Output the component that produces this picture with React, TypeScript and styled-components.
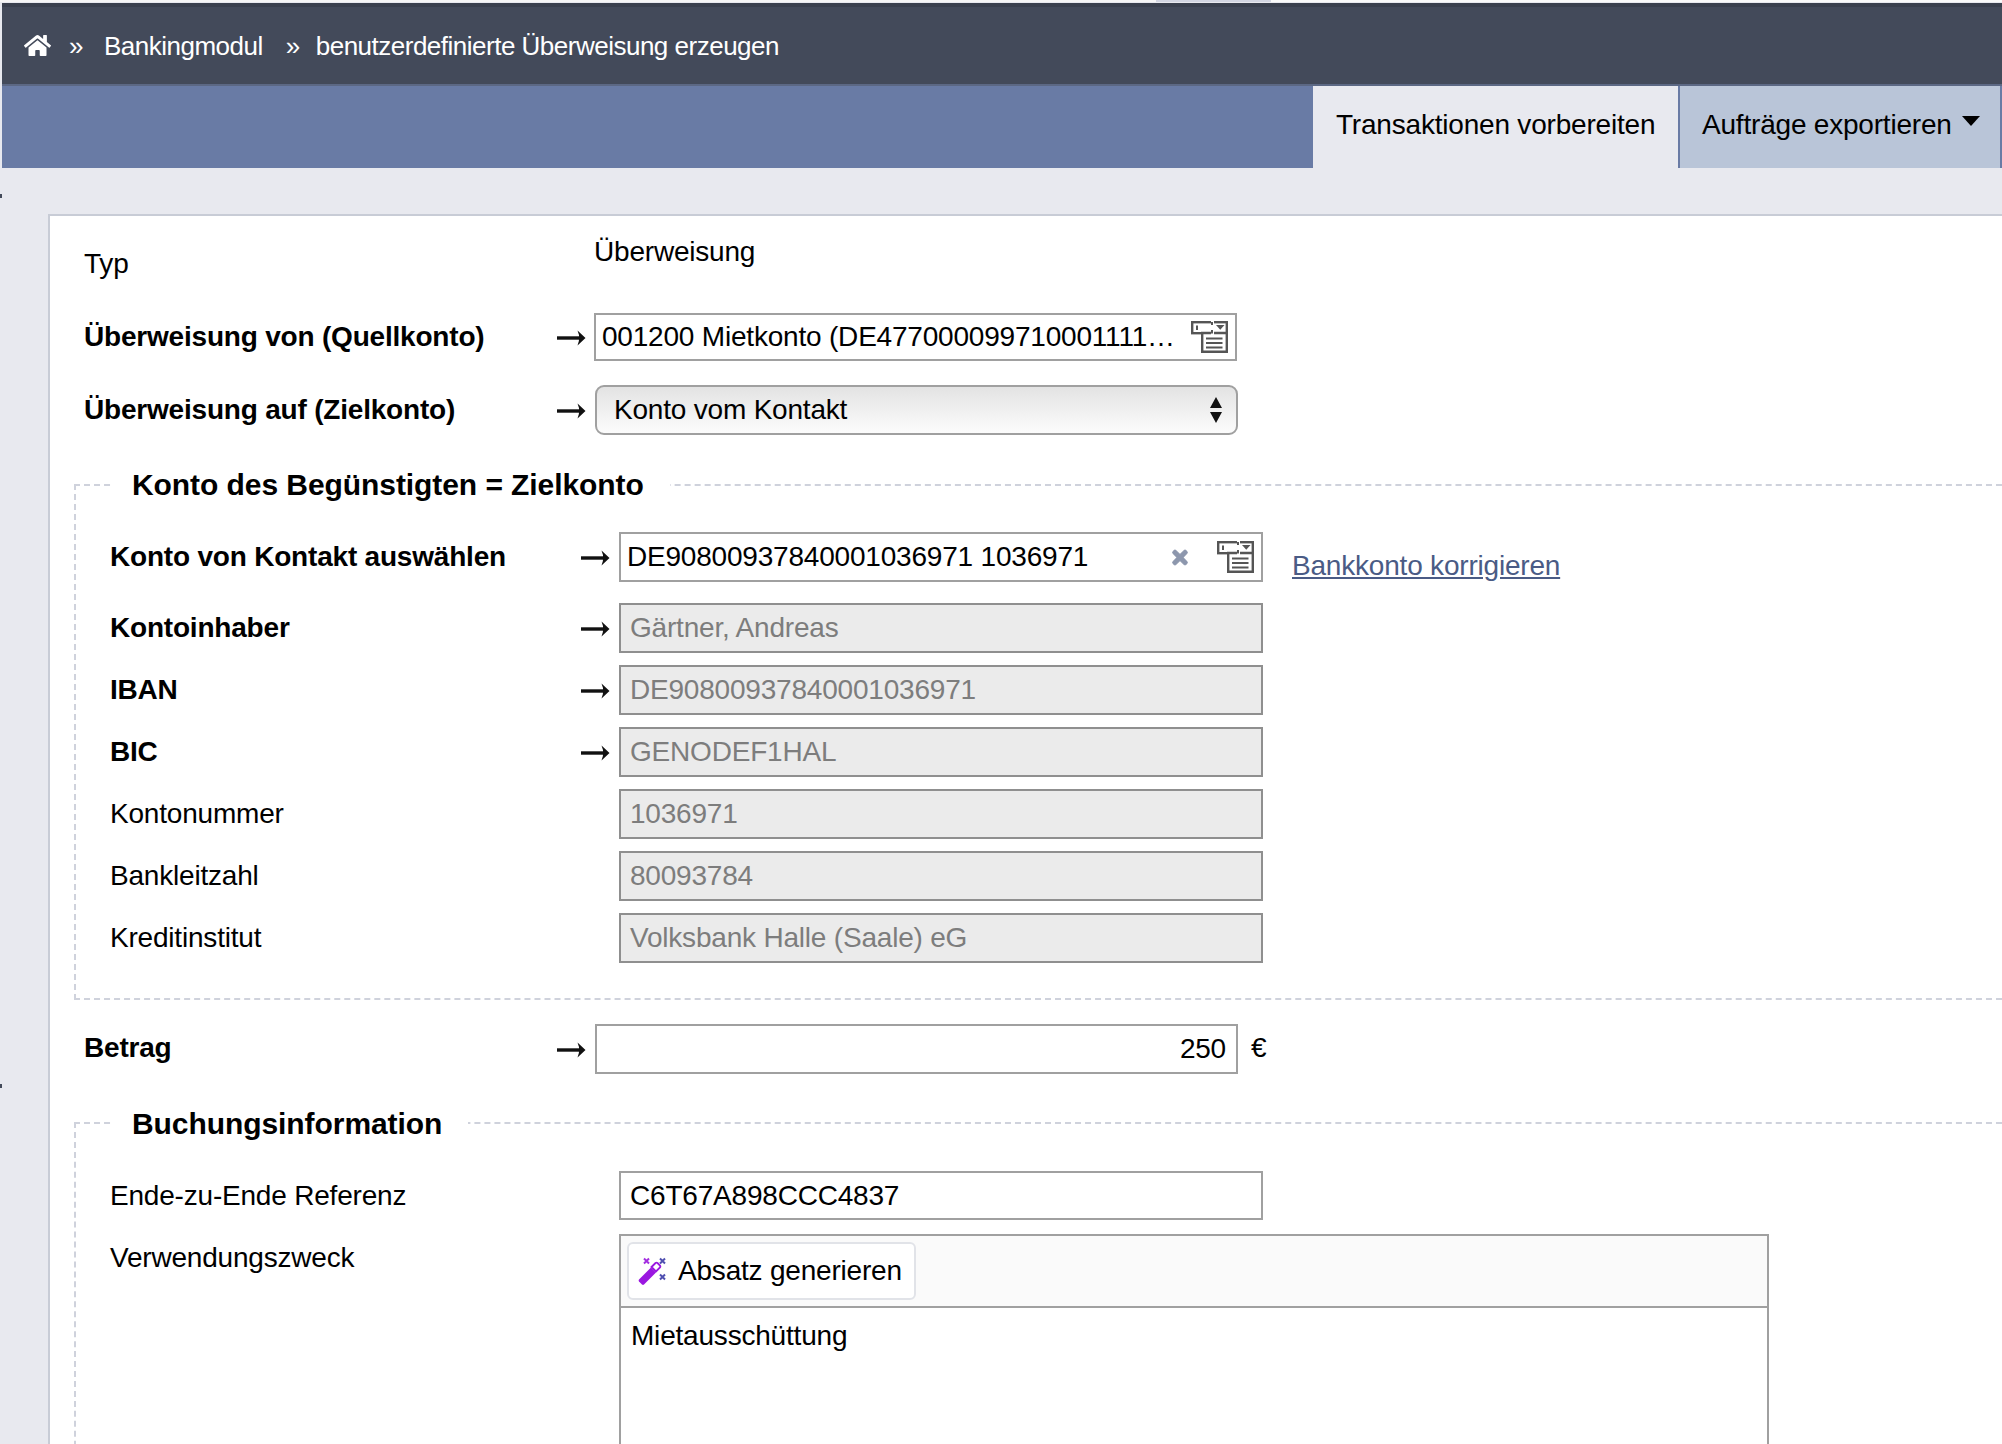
import styled, { createGlobalStyle } from "styled-components";
import { FaHome, FaTimes } from "react-icons/fa";

const GlobalStyle = createGlobalStyle`
  html, body {
    margin: 0;
    padding: 0;
    background: #e8e9ef;
  }
  * {
    box-sizing: border-box;
  }
`;

const Page = styled.div`
  position: relative;
  width: 2002px;
  height: 1444px;
  overflow: hidden;
  background: #e8e9ef;
  color: #000;
  font-family: "Liberation Sans", Arial, sans-serif;
  font-size: 28px;
  line-height: 32px;
  letter-spacing: -0.2px;
`;

const Tick = styled.i<{ $top: number }>`
  position: absolute;
  left: 0;
  top: ${(p) => p.$top}px;
  width: 2px;
  height: 4px;
  background: #434a5a;
`;

const TopStrip = styled.div`
  height: 3px;
  background: linear-gradient(90deg, #f6f6f6 1156px, #d3d6e2 1156px, #d3d6e2 1271px, #fafafa 1271px) no-repeat;
  background-size: 100% 2px;
`;

const TopBar = styled.header`
  display: flex;
  align-items: center;
  height: 83px;
  margin-left: 2px;
  padding-left: 22px;
  background: #434a5a;
  border-top: 4px solid #3a404e;
  border-bottom: 2px solid #5c6884;
  color: #fff;
  font-size: 26px;
  letter-spacing: -0.5px;
`;

const Crumb = styled.span<{ $last?: boolean }>`
  white-space: nowrap;
  padding: ${(p) => (p.$last ? "0" : "0 5px 0 3px")};
  margin-left: ${(p) => (p.$last ? "-2px" : "0")};
`;

const CrumbSep = styled.span`
  margin: 0 18px;
`;

const NavBar = styled.nav`
  display: flex;
  justify-content: flex-end;
  height: 82px;
  margin-left: 2px;
  background: #697ba5;
`;

const Tab = styled.div<{ $active?: boolean }>`
  display: flex;
  align-items: center;
  padding-bottom: 4px;
  white-space: nowrap;
  width: ${(p) => (p.$active ? "365px" : "324px")};
  padding-left: ${(p) => (p.$active ? "23px" : "22px")};
  background: ${(p) => (p.$active ? "#e8e9ef" : "#b9c5d8")};
  border-left: ${(p) => (p.$active ? "none" : "2px solid #697ba5")};
  border-right: ${(p) => (p.$active ? "none" : "2px solid #697ba5")};
`;

const Caret = styled.span`
  width: 0;
  height: 0;
  margin-left: 10px;
  margin-bottom: 8px;
  border-left: 9px solid transparent;
  border-right: 9px solid transparent;
  border-top: 10px solid #000;
`;

const Panel = styled.main`
  margin: 46px -20px 0 48px;
  height: 1300px;
  padding: 20px 0 0 34px;
  background: #fff;
  border-top: 2px solid #c8ccd6;
  border-left: 2px solid #c8ccd6;
`;

const TopRow = styled.div`
  display: grid;
  grid-template-columns: 510px 1fr;
  margin-bottom: 33px;
`;

const TypLabel = styled.span`
  margin-top: 12px;
`;

const Row = styled.div<{ $inner?: boolean; $gap?: number; $top?: number }>`
  display: grid;
  grid-template-columns: ${(p) => (p.$inner ? "471px 38px 644px auto" : "473px 37px 643px auto")};
  align-items: center;
  margin-top: ${(p) => p.$top ?? 0}px;
  margin-bottom: ${(p) => p.$gap ?? 0}px;
`;

const Label = styled.label<{ $bold?: boolean; $lift?: boolean }>`
  font-weight: ${(p) => (p.$bold ? 700 : 400)};
  white-space: nowrap;
  margin-top: ${(p) => (p.$lift ? "-2px" : "0")};
`;

const ArrowWrap = styled.span`
  display: flex;
  align-items: center;
  height: 18px;
  margin-top: 2px;
`;

const Field = styled.div<{ $disabled?: boolean; $right?: boolean; $h?: number; $shift?: boolean }>`
  display: flex;
  align-items: center;
  justify-content: ${(p) => (p.$right ? "flex-end" : "flex-start")};
  height: ${(p) => p.$h ?? 50}px;
  margin: ${(p) => (p.$shift ? "0 -1px 0 1px" : "0")};
  padding: 0 10px 0 9px;
  border: 2px solid ${(p) => (p.$disabled ? "#8f8f8f" : "#a0a0a0")};
  background: ${(p) => (p.$disabled ? "#ebebeb" : "#fff")};
  color: ${(p) => (p.$disabled ? "#7d7d7d" : "#000")};
  white-space: nowrap;
`;

const ComboField = styled(Field)`
  padding: 0 7px 0 6px;
`;

const ComboText = styled.span`
  flex: 1;
`;

const ClearIcon = styled(FaTimes)`
  width: 18px;
  height: 21px;
  margin-right: 28px;
  color: #8d97ad;
  stroke: #8d97ad;
  stroke-width: 28px;
`;

const SelectBox = styled.div`
  display: flex;
  align-items: center;
  justify-content: space-between;
  height: 50px;
  margin: 0 -1px 0 1px;
  padding: 0 13px 0 17px;
  border: 2px solid #a0a0a0;
  border-radius: 9px;
  background: linear-gradient(#e3e3e3, #fcfcfc);
`;

const SideLink = styled.a`
  margin: 18px 0 0 29px;
  color: #4a5b85;
  text-decoration: underline;
  white-space: nowrap;
`;

const Unit = styled.span`
  margin-left: 14px;
  margin-top: -3px;
`;

const Group = styled.fieldset<{ $top: number; $bottom?: number }>`
  min-width: 0;
  margin: ${(p) => p.$top}px 0 0 -10px;
  padding: 31px 0 ${(p) => p.$bottom ?? 0}px 34px;
  border: 2px dashed #cfd2dc;
`;

const GroupTitle = styled.legend<{ $low?: boolean }>`
  margin-left: 2px;
  padding: ${(p) => (p.$low ? "3px" : "0")} 26px 0 20px;
  font-size: 30px;
  font-weight: 700;
  line-height: 32px;
  letter-spacing: -0.07px;
`;

const Editor = styled.div`
  width: 1150px;
  height: 400px;
  border: 2px solid #a0a0a0;
`;

const EditorBar = styled.div`
  display: flex;
  align-items: center;
  height: 72px;
  padding-left: 6px;
  background: #fafafa;
  border-bottom: 2px solid #a0a0a0;
`;

const ToolButton = styled.button`
  display: flex;
  align-items: center;
  gap: 11px;
  height: 58px;
  padding: 0 12px 0 8px;
  background: #fff;
  border: 2px solid #e1e3e8;
  border-radius: 6px;
  color: #000;
  font: inherit;
  letter-spacing: inherit;
`;

const EditorText = styled.div`
  padding: 12px 10px;
`;

const VerwLabel = styled(Label)`
  align-self: start;
  margin-top: 8px;
`;

const Arrow = () => (
  <svg width="30" height="18" viewBox="0 0 30 18">
    <rect x="0" y="7.3" width="24" height="3.4" fill="#111" />
    <path d="M20.500 1.500 L28.500 9 L20.500 16.500 Q22.500 12 22 9 Q22.500 6 20.500 1.500 Z" fill="#111" />
  </svg>
);

const ListIcon = () => (
  <svg width="37" height="32" viewBox="0 0 37 32" style={{ flexShrink: 0 }}>
    <rect x="1.200" y="1.200" width="34.600" height="11" fill="#fff" stroke="#555" strokeWidth="2.400" />
    <path d="M11.200 12v18.800h24.600V12z" fill="#fff" stroke="#555" strokeWidth="2.400" />
    <path d="M20 0v3h3v-3zM20 10h3v4h-3z" fill="#fff" />
    <path d="M6 4.500v4.500M21 1v3M21 9v3.500" stroke="#555" strokeWidth="2" />
    <path d="M25 4h8.500l-4.250 4.800z" fill="#555" />
    <path d="M15 17.500h16.500M15 22h16.500M15 26.500h16.500" stroke="#555" strokeWidth="2.200" />
  </svg>
);

const UpDown = () => (
  <svg width="14" height="28" viewBox="0 0 14 28">
    <path d="M7 1l6 11H1zM1 16h12L7 27z" fill="#111" />
  </svg>
);

const Wand = () => (
  <svg width="30" height="30" viewBox="0 0 30 30">
    <path d="M2 23.500 L14 11.500 L19 16.500 L7 28.500 Q6 29.300 5 28.500 L2 25.500 Q1.300 24.500 2 23.500 Z" fill="#9a17e0" />
    <path d="M14.500 11 L18.500 7 Q19.500 6.300 20.500 7 L23 9.500 Q23.700 10.500 23 11.500 L19 15.500 Z" fill="#fff" stroke="#9a17e0" strokeWidth="1.800" />
    <path d="M7 2.500l5 5M12 2.500l-5 5" stroke="#a32ee0" strokeWidth="2" />
    <path d="M23 2.500l5 5M28 2.500l-5 5" stroke="#4f4fb0" strokeWidth="2" />
    <path d="M23 18.500l5 5M28 18.500l-5 5" stroke="#4f4fb0" strokeWidth="2" />
  </svg>
);

const readOnlyRows = [
	{ label: "Kontoinhaber", value: "Gärtner, Andreas", required: true },
	{ label: "IBAN", value: "DE90800937840001036971", required: true },
	{ label: "BIC", value: "GENODEF1HAL", required: true },
	{ label: "Kontonummer", value: "1036971" },
	{ label: "Bankleitzahl", value: "80093784" },
	{ label: "Kreditinstitut", value: "Volksbank Halle (Saale) eG" },
];

export default function App() {
	return (
		<Page>
			<GlobalStyle />
			<Tick $top={194} />
			<Tick $top={1084} />
			<TopStrip />
			<TopBar>
				<FaHome size={27} />
				<CrumbSep>»</CrumbSep>
				<Crumb>Bankingmodul</Crumb>
				<CrumbSep>»</CrumbSep>
				<Crumb $last>benutzerdefinierte Überweisung erzeugen</Crumb>
			</TopBar>
			<NavBar>
				<Tab $active>Transaktionen vorbereiten</Tab>
				<Tab>
					Aufträge exportieren
					<Caret />
				</Tab>
			</NavBar>
			<Panel>
				<TopRow>
					<TypLabel>Typ</TypLabel>
					<span>Überweisung</span>
				</TopRow>
				<Row $gap={24}>
					<Label $bold>Überweisung von (Quellkonto)</Label>
					<ArrowWrap>
						<Arrow />
					</ArrowWrap>
					<ComboField $h={48}>
						<ComboText>001200 Mietkonto (DE477000099710001111…</ComboText>
						<ListIcon />
					</ComboField>
				</Row>
				<Row>
					<Label $bold>Überweisung auf (Zielkonto)</Label>
					<ArrowWrap>
						<Arrow />
					</ArrowWrap>
					<SelectBox>
						Konto vom Kontakt
						<UpDown />
					</SelectBox>
				</Row>
				<Group $top={34} $bottom={35}>
					<GroupTitle>Konto des Begünstigten = Zielkonto</GroupTitle>
					<Row $inner $gap={21}>
						<Label $bold>Konto von Kontakt auswählen</Label>
						<ArrowWrap>
							<Arrow />
						</ArrowWrap>
						<ComboField>
							<ComboText>DE90800937840001036971 1036971</ComboText>
							<ClearIcon />
							<ListIcon />
						</ComboField>
						<SideLink href="#">Bankkonto korrigieren</SideLink>
					</Row>
					{readOnlyRows.map((row, i) => (
						<Row $inner $gap={i < readOnlyRows.length - 1 ? 12 : 0} key={row.label}>
							<Label $bold={row.required}>{row.label}</Label>
							<ArrowWrap>{row.required && <Arrow />}</ArrowWrap>
							<Field $disabled>{row.value}</Field>
						</Row>
					))}
				</Group>
				<Row $top={24}>
					<Label $bold $lift>Betrag</Label>
					<ArrowWrap>
						<Arrow />
					</ArrowWrap>
					<Field $right $shift>250</Field>
					<Unit>€</Unit>
				</Row>
				<Group $top={31}>
					<GroupTitle $low>Buchungsinformation</GroupTitle>
					<Row $inner $gap={14}>
						<Label>Ende-zu-Ende Referenz</Label>
						<span />
						<Field $h={49}>C6T67A898CCC4837</Field>
					</Row>
					<Row $inner>
						<VerwLabel>Verwendungszweck</VerwLabel>
						<span />
						<Editor>
							<EditorBar>
								<ToolButton type="button">
									<Wand />
									Absatz generieren
								</ToolButton>
							</EditorBar>
							<EditorText>Mietausschüttung</EditorText>
						</Editor>
					</Row>
				</Group>
			</Panel>
		</Page>
	);
}
